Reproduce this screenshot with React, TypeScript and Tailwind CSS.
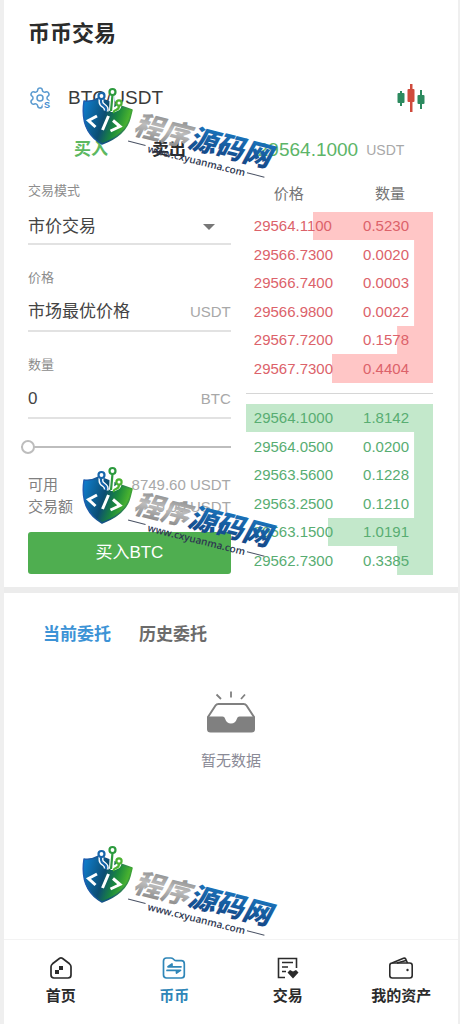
import { useState } from "react";
import { Settings } from "lucide-react";

type Level = { price: string; amount: string; depth: number };

const asks: Level[] = [
  { price: "29564.1100", amount: "0.5230", depth: 64 },
  { price: "29566.7300", amount: "0.0020", depth: 10 },
  { price: "29566.7400", amount: "0.0003", depth: 10 },
  { price: "29566.9800", amount: "0.0022", depth: 10 },
  { price: "29567.7200", amount: "0.1578", depth: 19 },
  { price: "29567.7300", amount: "0.4404", depth: 54 },
];

const bids: Level[] = [
  { price: "29564.1000", amount: "1.8142", depth: 100 },
  { price: "29564.0500", amount: "0.0200", depth: 10 },
  { price: "29563.5600", amount: "0.1228", depth: 10 },
  { price: "29563.2500", amount: "0.1210", depth: 10 },
  { price: "29563.1500", amount: "1.0191", depth: 56 },
  { price: "29562.7300", amount: "0.3385", depth: 19 },
];

function PairIcon() {
  return (
    <span className="relative block size-6 text-[#5b9bd0]">
      <Settings className="size-6" strokeWidth={1.5} />
      <svg viewBox="0 0 12 12" className="absolute bottom-0 right-0 size-3" aria-hidden="true">
        <circle cx="7" cy="7" r="4.500" fill="#fff" />
        <text x="4" y="10" fontSize="9" fontWeight="700" fill="#3f8bd0" fontFamily="Liberation Sans, sans-serif">
          S
        </text>
      </svg>
    </span>
  );
}

function CandlesIcon() {
  return (
    <svg viewBox="0 0 28 28" className="size-7" aria-hidden="true">
      <g fill="#2c8a5f">
        <path d="M3 7h2v15H3z" />
        <rect x="0.500" y="9" width="7" height="10" rx="1" />
        <path d="M23 6h2v19h-2z" />
        <rect x="20.500" y="11" width="7" height="9" rx="1" />
      </g>
      <g fill="#cf4a3c">
        <path d="M13 0h2.500v28H13z" />
        <rect x="10.500" y="5" width="7" height="13" rx="1" />
      </g>
    </svg>
  );
}

function EmptyIcon() {
  return (
    <svg viewBox="0 0 50 42" className="h-[42px] w-[50px]" fill="none" stroke="#808080" aria-hidden="true">
      <path d="M10.500 3.500l4.500 4.500M25 0.500v6M39 3.500l-4 4.500" strokeWidth="1.800" />
      <path
        d="M2 26l7.500-11.500q1-1.500 3-1.500h25q2 0 3 1.500L48 26v12q0 2.500-2.500 2.500h-41Q2 40.500 2 38z"
        strokeWidth="2"
        strokeLinejoin="round"
      />
      <path
        d="M1.500 25.500h15q2 0 2.500 2 1.500 5 6 5t6-5q.5-2 2.500-2h15V38q0 2.500-2.500 2.500h-41Q1.500 40.500 1.500 38z"
        fill="#808080"
        stroke="none"
      />
    </svg>
  );
}

function HomeIcon() {
  return (
    <svg viewBox="0 0 24 24" className="size-6" fill="none" stroke="currentColor" strokeWidth="1.700" aria-hidden="true">
      <path
        d="M10.700 2.300q1.300-.9 2.600 0l7.200 5.500q1.500 1.200 1.500 3V19q0 3-3 3H5q-3 0-3-3v-8.200q0-1.800 1.500-3z"
        strokeLinejoin="round"
      />
      <path d="M6 14h4v4H6zM10 10h4v4h-4z" fill="currentColor" stroke="none" />
    </svg>
  );
}

function CoinIcon() {
  return (
    <svg
      viewBox="0 0 24 24"
      className="size-6"
      fill="none"
      stroke="currentColor"
      strokeWidth="1.700"
      strokeLinecap="round"
      strokeLinejoin="round"
      aria-hidden="true"
    >
      <path d="M1.500 5q0-3 3-3h4.300q1.500 0 2.500 1l1 1q.7.700 2 .7h5q3 0 3 3V19q0 3-3 3H4.500q-3 0-3-3z" />
      <path d="M19 10.800H6l4-2.800v2.800M5 14.400h13.500l-4 2.600v-2.600" />
    </svg>
  );
}

function OrderIcon() {
  return (
    <svg viewBox="0 0 24 24" className="size-6" fill="none" stroke="currentColor" strokeWidth="1.600" aria-hidden="true">
      <path d="M20.500 12V2.500h-18V21.500H9M6 6.500h11M6 11h6M6 15.500h4" />
      <path d="M11.500 16.500l2.500-2.500 3 1.500 3-1.500 2.500 2.500-5.500 6z" fill="currentColor" stroke="none" />
    </svg>
  );
}

function WalletIcon() {
  return (
    <svg
      viewBox="0 0 24 24"
      className="size-6"
      fill="none"
      stroke="currentColor"
      strokeWidth="1.600"
      strokeLinejoin="round"
      aria-hidden="true"
    >
      <rect x="0.800" y="7" width="22.400" height="15" rx="2.500" />
      <path d="M3 7l11.500-4.800q1.500-.5 2.200.8L18.500 7M8 7l9-2.500" />
      <circle cx="18.500" cy="14" r="1.200" fill="currentColor" stroke="none" />
    </svg>
  );
}

function Watermark({ id }: { id: string }) {
  return (
    <svg viewBox="0 0 200 96" className="h-24 w-[200px]">
      <defs>
        <linearGradient id={`${id}-shield`} x1="0" y1="0.200" x2="1" y2="0.500">
          <stop offset="0" stopColor="#0f7ccb" />
          <stop offset="0.450" stopColor="#0c4d72" />
          <stop offset="0.700" stopColor="#1b8a3c" />
          <stop offset="1" stopColor="#5cc32a" />
        </linearGradient>
        <linearGradient id={`${id}-edge`} x1="0" y1="0" x2="1" y2="0">
          <stop offset="0" stopColor="#1f5fb4" />
          <stop offset="0.500" stopColor="#12507c" />
          <stop offset="1" stopColor="#3fa535" />
        </linearGradient>
        <linearGradient id={`${id}-silver`} x1="0" y1="0" x2="0" y2="1">
          <stop offset="0" stopColor="#777" />
          <stop offset="0.500" stopColor="#bdbdbd" />
          <stop offset="1" stopColor="#7c7c7c" />
        </linearGradient>
        <linearGradient id={`${id}-blue`} x1="0" y1="0" x2="0" y2="1">
          <stop offset="0" stopColor="#1c80c9" />
          <stop offset="1" stopColor="#123f7e" />
        </linearGradient>
      </defs>
      <path
        d="M4 16q8 1 15-3l16 6 17 6q-1 4-2 8c-3 12-12 20-28 26C6 50 1 36 4 16z"
        fill={`url(#${id}-shield)`}
        stroke={`url(#${id}-edge)`}
        strokeWidth="1.500"
        strokeLinejoin="round"
      />
      <g fill="none" stroke="#fff" strokeWidth="5">
        <path d="M21 12v5q0 2 3 4t2 5M32.500 8l-1 18M39 19q0 4-3 5t-3 3" />
      </g>
      <g fill="none" strokeWidth="2.200">
        <path d="M21 14v3q0 2 3 4t2 5" stroke="#1766ac" />
        <path d="M32.500 10l-1.500 16" stroke="#2c9a3e" />
        <path d="M39 21q0 3-3 4t-2 3" stroke="#4bb131" />
        <circle cx="21.500" cy="11" r="3" fill="#fff" stroke="#1766ac" />
        <circle cx="32.500" cy="7" r="3" fill="#fff" stroke="#2c9a3e" />
        <circle cx="39" cy="18" r="2.600" fill="#fff" stroke="#4bb131" />
      </g>
      <path
        d="M17 31L8.500 35.500l7 6.500M28.500 31l-6 14M33 35.500l7 6-9.500 4.500"
        fill="none"
        stroke="#fff"
        strokeWidth="3"
      />
      <g transform="rotate(14 54 50)" fontFamily="'Noto Sans CJK SC', sans-serif" fontWeight="900" fontSize="28">
        <text x="52" y="49" fontStyle="italic" fill={`url(#${id}-silver)`}>
          程序
        </text>
        <text x="108" y="49" fontStyle="italic" fill={`url(#${id}-blue)`}>
          源码网
        </text>
      </g>
      <g transform="rotate(14 67 67)">
        <text x="67" y="67" fontFamily="'Open Sans', sans-serif" fontWeight="600" fontSize="10" fill="#2d3650">
          www.cxyuanma.com
        </text>
        <path d="M46 61h18M169 63h18" stroke="#4a5264" strokeWidth="1" />
      </g>
    </svg>
  );
}

function BookRows({ levels, rowClass, color }: { levels: Level[]; rowClass: string; color: string }) {
  return (
    <tbody className={rowClass}>
      {levels.map((level) => (
        <tr
          key={level.price}
          className="odd:h-7 even:h-[29px]"
          style={{
            backgroundImage: `linear-gradient(to left, ${color} ${level.depth}%, transparent ${level.depth}%)`,
          }}
        >
          <td className="p-0 pl-2 text-left">{level.price}</td>
          <td className="p-0 pr-6 text-right">{level.amount}</td>
        </tr>
      ))}
    </tbody>
  );
}

const navItems = [
  { label: "首页", icon: HomeIcon, active: false },
  { label: "币币", icon: CoinIcon, active: true },
  { label: "交易", icon: OrderIcon, active: false },
  { label: "我的资产", icon: WalletIcon, active: false },
];

export default function App() {
  const [amount, setAmount] = useState("0");
  const [percent, setPercent] = useState(0);

  return (
    <div className="relative min-h-screen bg-[#efefef] pl-1 pr-0.5 font-['Liberation_Sans','Noto_Sans_CJK_SC',sans-serif] text-[15px]">
      <div className="flex min-h-screen flex-col bg-white">
        <header className="pl-6 pr-[33px] pt-5">
          <h1 className="text-[22px] font-bold leading-7 text-[#2b2b2b]">币币交易</h1>
          <div className="mt-9 flex h-7 items-center">
            <PairIcon />
            <h2 className="ml-4 text-[19px] text-[#3a3a3a]">BTC/USDT</h2>
            <button type="button" aria-label="K线" className="ml-auto">
              <CandlesIcon />
            </button>
          </div>
        </header>

        <main className="flex flex-1 flex-col">
          <section className="mt-6 grid grid-cols-[minmax(0,13fr)_minmax(0,12fr)] gap-x-[15px] border-b-6 border-[#ececec] pb-3 pl-6 pr-[25px]">
            <form onSubmit={(e) => e.preventDefault()}>
              <div className="flex h-7 items-center gap-11 pl-[46px] text-[17px] font-bold">
                <button type="button" className="text-[#5cb860]">
                  买入
                </button>
                <button type="button" className="text-[#2b2b2b]">
                  卖出
                </button>
              </div>

              <div className="mt-[17px] flex flex-col gap-[23px]">
                <div>
                  <label htmlFor="mode" className="block text-[13px] leading-5 text-[#8c8c8c]">
                    交易模式
                  </label>
                  <div className="mt-1.5 flex h-[38px] items-center border-b-2 border-[#e2e2e2] pt-1">
                    <select id="mode" className="min-w-0 flex-1 appearance-none text-[17px] text-[#444]">
                      <option>市价交易</option>
                    </select>
                    <svg viewBox="0 0 12 6" className="mr-4 h-1.5 w-3" aria-hidden="true">
                      <path d="M0 0h12L6 6z" fill="#777" />
                    </svg>
                  </div>
                </div>
                <div>
                  <label htmlFor="price" className="block text-[13px] leading-5 text-[#8c8c8c]">
                    价格
                  </label>
                  <div className="mt-1.5 flex h-[38px] items-center border-b-2 border-[#e2e2e2]">
                    <input
                      id="price"
                      readOnly
                      value="市场最优价格"
                      className="min-w-0 flex-1 text-[17px] text-[#444] outline-none"
                    />
                    <span className="text-[#a8a8a8]">USDT</span>
                  </div>
                </div>
                <div>
                  <label htmlFor="amount" className="block text-[13px] leading-5 text-[#8c8c8c]">
                    数量
                  </label>
                  <div className="mt-1.5 flex h-[38px] items-center border-b-2 border-[#e2e2e2]">
                    <input
                      id="amount"
                      value={amount}
                      onChange={(e) => setAmount(e.target.value)}
                      className="min-w-0 flex-1 text-[17px] text-[#444] outline-none"
                    />
                    <span className="text-[#a8a8a8]">BTC</span>
                  </div>
                </div>
              </div>

              <input
                type="range"
                aria-label="数量比例"
                value={percent}
                onChange={(e) => setPercent(Number(e.target.value))}
                className="-ml-[7px] mt-[21px] block h-3.5 w-[calc(100%+7px)] appearance-none bg-transparent [&::-webkit-slider-runnable-track]:h-0.5 [&::-webkit-slider-runnable-track]:bg-[#bdbdbd] [&::-webkit-slider-thumb]:-mt-1.5 [&::-webkit-slider-thumb]:size-3.5 [&::-webkit-slider-thumb]:appearance-none [&::-webkit-slider-thumb]:rounded-full [&::-webkit-slider-thumb]:border-2 [&::-webkit-slider-thumb]:border-[#bdbdbd] [&::-webkit-slider-thumb]:bg-white"
              />

              <dl className="mt-5 leading-[22px]">
                <div className="flex justify-between">
                  <dt className="text-[#808080]">可用</dt>
                  <dd className="text-[#a8a8a8]">8749.60 USDT</dd>
                </div>
                <div className="flex justify-between">
                  <dt className="text-[#808080]">交易额</dt>
                  <dd className="text-[#a8a8a8]">0.00 USDT</dd>
                </div>
              </dl>

              <button type="submit" className="mt-3.5 h-[42px] w-full rounded-[3px] bg-[#4fae50] text-[17px] text-white">
                买入BTC
              </button>
            </form>

            <div>
              <div className="flex h-7 items-center gap-2 pl-3">
                <span className="text-[19px] text-[#5cb568]">29564.1000</span>
                <span className="text-sm text-[#a8a8a8]">USDT</span>
              </div>
              <table className="mt-5 w-full border-collapse leading-5">
                <thead>
                  <tr className="h-7 text-[#757575]">
                    <th className="p-0 pb-2 pl-7 text-left font-normal">价格</th>
                    <th className="p-0 pb-2 pr-7 text-right font-normal">数量</th>
                  </tr>
                </thead>
                <BookRows levels={asks} rowClass="text-[#dc626a]" color="#ffc6c6" />
                <tbody>
                  <tr className="h-[21px]">
                    <td colSpan={2} className="p-0">
                      <hr className="border-[#d6d6d6]" />
                    </td>
                  </tr>
                </tbody>
                <BookRows levels={bids} rowClass="text-[#58ad72]" color="#c3e8cb" />
              </table>
            </div>
          </section>

          <section>
            <div className="flex gap-7 pl-[39px] pt-7 text-[17px] font-bold leading-7">
              <button type="button" className="text-[#3c93d6]">
                当前委托
              </button>
              <button type="button" className="text-[#6b6b6b]">
                历史委托
              </button>
            </div>
            <div className="mt-[42px] flex flex-col items-center pb-10">
              <EmptyIcon />
              <p className="mt-4 leading-6 text-[#8a8a96]">暂无数据</p>
            </div>
          </section>
        </main>

        <nav className="grid grid-cols-4 border-t border-[#f3f3f3] pb-[18px] pt-4">
          {navItems.map(({ label, icon: Icon, active }) => (
            <a
              key={label}
              href="#"
              className={`flex flex-col items-center gap-1.5 font-bold leading-5 ${active ? "text-[#2f86b8]" : "text-[#2b2b2b]"}`}
            >
              <Icon />
              {label}
            </a>
          ))}
        </nav>
      </div>

      <div className="pointer-events-none absolute left-20 top-[85px] flex flex-col gap-[283px]">
        <Watermark id="wm-top" />
        <Watermark id="wm-middle" />
        <Watermark id="wm-bottom" />
      </div>
    </div>
  );
}
